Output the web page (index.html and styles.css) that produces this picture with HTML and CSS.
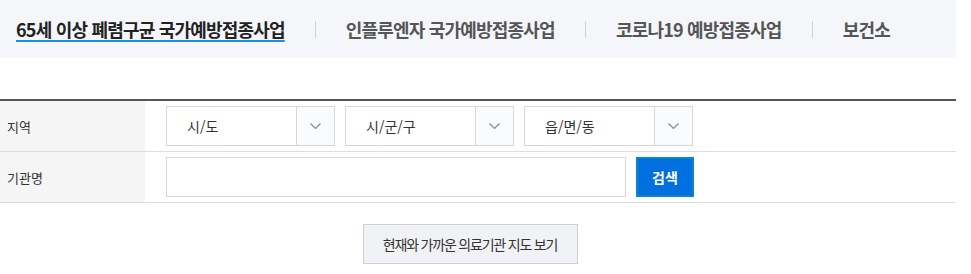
FILE: index.html
```html
<!DOCTYPE html>
<html lang="ko">
<head>
<meta charset="utf-8">
<link rel="stylesheet" href="styles.css">
</head>
<body>
<div class="page">
  <nav class="tabs">
    <a class="tab active">65세 이상 폐렴구균 국가예방접종사업</a>
    <span class="sep"></span>
    <a class="tab">인플루엔자 국가예방접종사업</a>
    <span class="sep"></span>
    <a class="tab">코로나19 예방접종사업</a>
    <span class="sep"></span>
    <a class="tab">보건소</a>
  </nav>

  <div class="search">
    <div class="row">
      <div class="label">지역</div>
      <div class="cell">
        <div class="select"><span class="val">시/도</span><span class="arrow"><svg width="11" height="6" viewBox="0 0 11 6"><path d="M0.5 0.5 L5.5 5.5 L10.5 0.5" fill="none" stroke="#888" stroke-width="1.1"/></svg></span></div>
        <div class="select"><span class="val">시/군/구</span><span class="arrow"><svg width="11" height="6" viewBox="0 0 11 6"><path d="M0.5 0.5 L5.5 5.5 L10.5 0.5" fill="none" stroke="#888" stroke-width="1.1"/></svg></span></div>
        <div class="select"><span class="val">읍/면/동</span><span class="arrow"><svg width="11" height="6" viewBox="0 0 11 6"><path d="M0.5 0.5 L5.5 5.5 L10.5 0.5" fill="none" stroke="#888" stroke-width="1.1"/></svg></span></div>
      </div>
    </div>
    <div class="row">
      <div class="label">기관명</div>
      <div class="cell">
        <div class="input"></div>
        <button class="btn-search">검색</button>
      </div>
    </div>
  </div>

  <div class="map-wrap">
    <button class="btn-map">현재와 가까운 의료기관 지도 보기</button>
  </div>
</div>
</body>
</html>
```

FILE: styles.css
```css
* { box-sizing: border-box; }
html, body { margin: 0; padding: 0; background: #fff; }
body {
  font-family: "Noto Sans CJK KR", "Noto Sans", sans-serif;
  color: #333;
}
.page { width: 956px; }

.tabs {
  height: 58px;
  background: #f4f6f9;
  display: flex;
  align-items: center;
  padding-left: 16px;
}
.tab {
  font-size: 18px;
  font-weight: 700;
  color: #555;
  letter-spacing: -0.8px;
  line-height: 22px;
  white-space: nowrap;
}
.tab.active {
  color: #222;
  text-decoration: underline;
  text-decoration-color: #1a8fe3;
  text-decoration-thickness: 2px;
  text-underline-offset: 3px;
}
.sep {
  width: 1px;
  height: 17px;
  background: #cfd3d8;
  margin: 0 30px;
}

.search {
  margin-top: 41px;
  border-top: 2px solid #555;
}
.row {
  display: flex;
  height: 51px;
  border-bottom: 1px solid #ddd;
}
.label {
  width: 145px;
  background: #f5f5f5;
  font-size: 13px;
  color: #333;
  padding-left: 7px;
  display: flex;
  align-items: center;
}
.cell {
  flex: 1;
  display: flex;
  align-items: center;
  padding-left: 21px;
  gap: 10px;
}
.select {
  width: 169px;
  height: 40px;
  border: 1px solid #d5d7dc;
  display: flex;
  align-items: stretch;
  background: #fff;
}
.val {
  flex: 1;
  display: flex;
  align-items: center;
  padding-left: 20px;
  font-size: 14px;
  color: #333;
}
.arrow {
  width: 38px;
  border-left: 1px solid #d5d7dc;
  background: #fafbfd;
  display: flex;
  align-items: center;
  justify-content: center;
}
.input {
  width: 460px;
  height: 40px;
  border: 1px solid #d5d7dc;
  background: #fff;
}
.btn-search {
  width: 58px;
  height: 40px;
  margin: 0;
  border: 2px solid #0b86c8;
  background: #0070e0;
  color: #fff;
  font-family: inherit;
  font-size: 14px;
  font-weight: 700;
  padding: 0;
}

.map-wrap {
  display: flex;
  justify-content: center;
  padding-top: 21px;
  padding-right: 16px;
}
.btn-map {
  width: 215px;
  height: 40px;
  margin: 0;
  border: 1px solid #cfcfd2;
  background: #f1f2f5;
  color: #333;
  font-family: inherit;
  font-size: 14px;
  letter-spacing: -1.2px;
  padding: 0;
}
```
